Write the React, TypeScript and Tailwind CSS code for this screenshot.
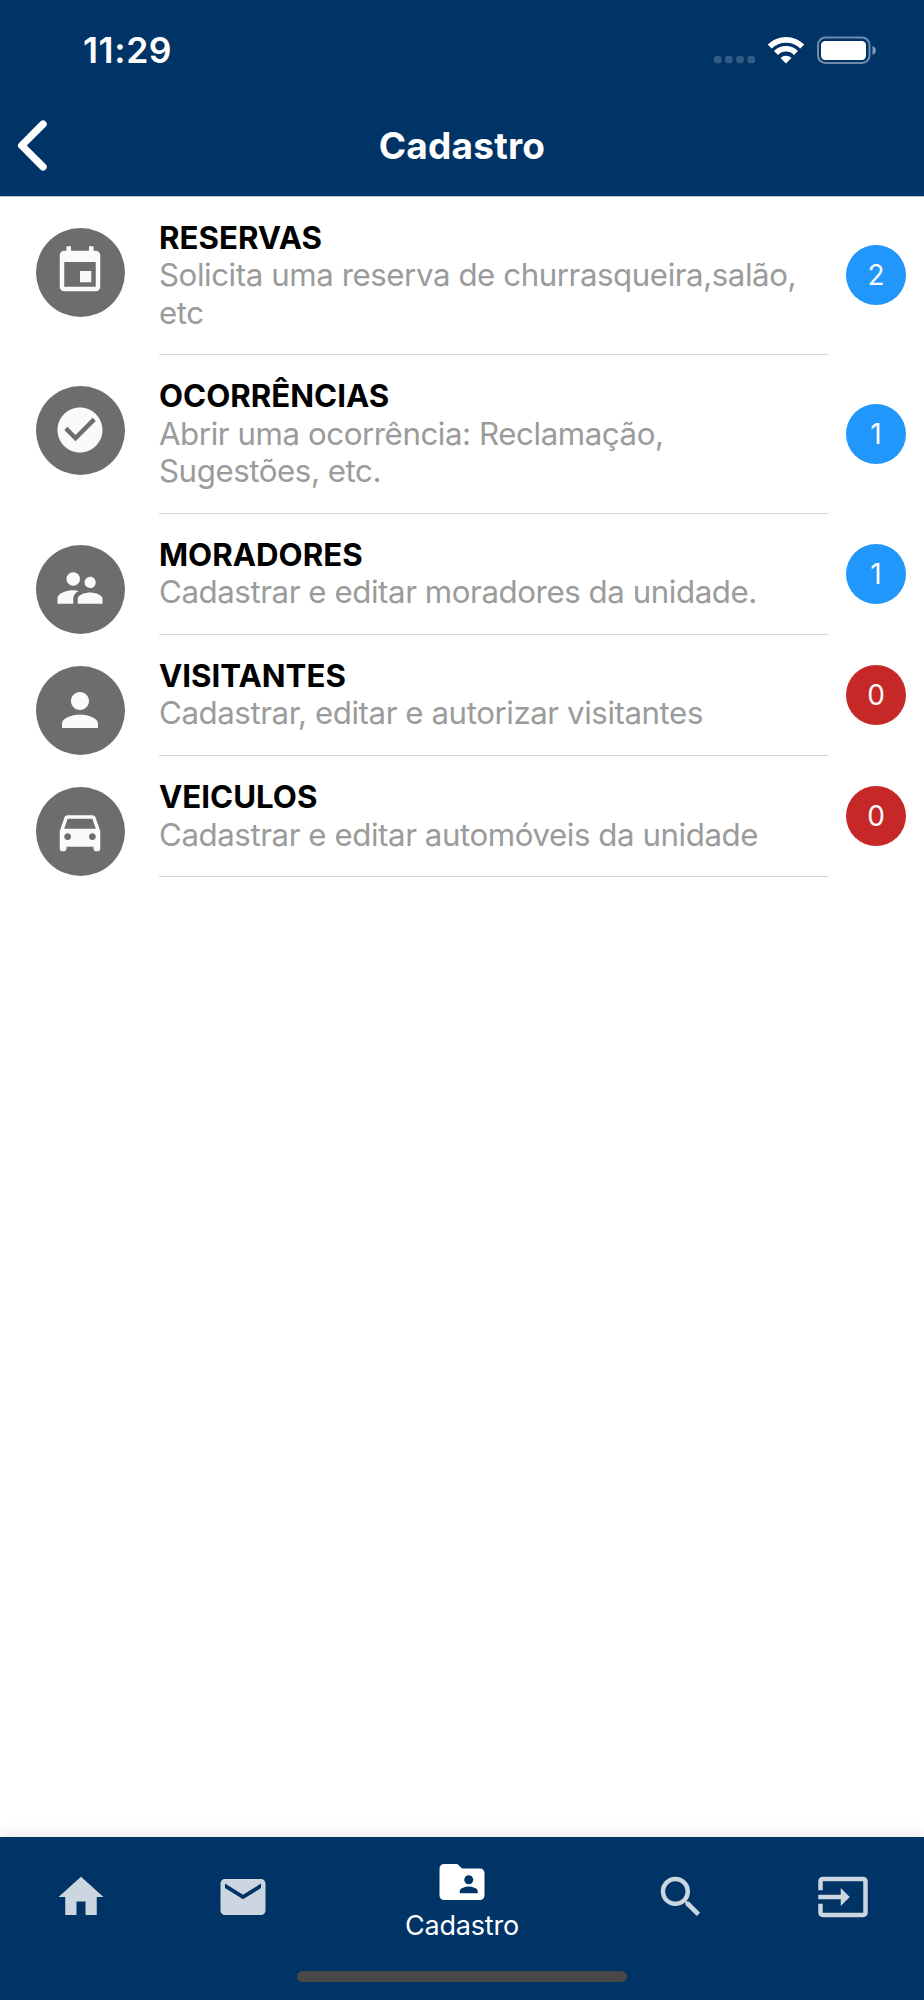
import React from "react";
import {
  MdCheckCircle,
  MdDirectionsCar,
  MdEvent,
  MdFolderShared,
  MdHome,
  MdInput,
  MdMail,
  MdPerson,
  MdSearch,
  MdSupervisorAccount,
} from "react-icons/md";
import type { IconType } from "react-icons";

type Entry = {
  title: string;
  text: string;
  count: number;
  Icon: IconType;
};

const entries: Entry[] = [
  { title: "RESERVAS", text: "Solicita uma reserva de churrasqueira,salão, etc", count: 2, Icon: MdEvent },
  { title: "OCORRÊNCIAS", text: "Abrir uma ocorrência: Reclamação, Sugestões, etc.", count: 1, Icon: MdCheckCircle },
  { title: "MORADORES", text: "Cadastrar e editar moradores da unidade.", count: 1, Icon: MdSupervisorAccount },
  { title: "VISITANTES", text: "Cadastrar, editar e autorizar visitantes", count: 0, Icon: MdPerson },
  { title: "VEICULOS", text: "Cadastrar e editar automóveis da unidade", count: 0, Icon: MdDirectionsCar },
];

function StatusBar() {
  return (
    <div className="flex h-[100px] items-center justify-between pl-[83px] pr-[47px] text-white">
      <span className="pt-[2px] text-[35.5px] font-semibold leading-[42px] tracking-[0.6px]">11:29</span>
      <svg width="164" height="30" viewBox="713 35 164 30" fill="none">
        <g fill="#335c85">
          <rect x="714" y="56" width="7.6" height="7.2" rx="2.4" />
          <rect x="725" y="56" width="7.6" height="7.2" rx="2.4" />
          <rect x="736.2" y="56" width="7.6" height="7.2" rx="2.4" />
          <rect x="747.4" y="56" width="7.6" height="7.2" rx="2.4" />
        </g>
        <g stroke="#fff" strokeWidth="5.6">
          <path d="M769.7 46.6a23 23 0 0 1 32.6 0" />
          <path d="M776 53a14 14 0 0 1 20 0" />
        </g>
        <path d="M780.5 58a7.8 7.8 0 0 1 11 0l-5.5 5.4z" fill="#fff" />
        <rect x="818" y="37.5" width="51.5" height="25.5" rx="7.5" stroke="#6f8cab" strokeWidth="2" />
        <rect x="821" y="41" width="45" height="19" rx="4.2" fill="#fff" />
        <path d="M872.5 46v9c2-.8 3.4-2.5 3.4-4.5s-1.4-3.7-3.4-4.5z" fill="#7f99b3" />
      </svg>
    </div>
  );
}

function TitleBar() {
  return (
    <div className="grid h-[91px] grid-cols-[1fr_auto_1fr] items-center text-white">
      <svg width="64" height="70" viewBox="0 110.5 64 70" fill="none" aria-label="Voltar">
        <path d="M43 123.7L21.7 145L43 166.3" stroke="#fff" strokeWidth="7.4" strokeLinecap="round" strokeLinejoin="round" />
      </svg>
      <h1 className="text-[37px] font-bold leading-[44px] tracking-[0.2px]">Cadastro</h1>
      <span />
    </div>
  );
}

function Row({ title, text, count, Icon }: Entry) {
  return (
    <li className="flex pl-9 pr-[18px]">
      <div className="mt-[31.2px] flex size-[89.2px] shrink-0 items-center justify-center rounded-full bg-[#6d6d6d]">
        <Icon className="mr-[2px] mb-[2px] size-[54px] text-[#fafafa]" />
      </div>
      <div className="ml-[33.8px] flex-1 border-b border-[#d6d6d6] pt-[23.2px] pb-[21.9px] text-[31.25px] leading-[37.5px]">
        <h2 className="font-bold text-black">{title}</h2>
        <p className="tracking-[-0.43px] text-[#9b9b9b]">{text}</p>
      </div>
      <span
        className={
          "mb-[0.8px] ml-[18px] flex size-[60px] shrink-0 items-center justify-center self-center rounded-full text-[28px] leading-[34px] text-[#fafafa] " +
          (count > 0 ? "bg-[#2196fb]" : "bg-[#c62828]")
        }
      >
        {count}
      </span>
    </li>
  );
}

function NavItem({ Icon }: { Icon: IconType }) {
  return (
    <button className="flex h-[120px] w-[161.7px] items-center justify-center text-[#ccd6e0]">
      <Icon className="size-[54px]" />
    </button>
  );
}

export default function App() {
  return (
    <div className="flex h-[2000px] w-[924px] flex-col overflow-hidden bg-white font-['Inter','Liberation_Sans',sans-serif]">
      <header className="h-[196.5px] shrink-0 border-b border-[#c4c4c8] bg-[#003366]">
        <StatusBar />
        <TitleBar />
      </header>
      <main className="flex-1">
        <ul>
          {entries.map((entry) => (
            <Row key={entry.title} {...entry} />
          ))}
        </ul>
      </main>
      <nav className="h-[163px] shrink-0 bg-[#003366] shadow-[0_-2px_14px_rgba(0,0,0,0.11)]">
        <div className="flex h-[134px] items-start">
          <NavItem Icon={MdHome} />
          <NavItem Icon={MdMail} />
          <button className="flex h-[134px] w-[277.2px] flex-col items-center pt-[17.5px] text-white">
            <MdFolderShared className="size-[54px]" />
            <span className="mt-[1.6px] text-[27px] leading-[32px] tracking-[-0.2px]">Cadastro</span>
          </button>
          <NavItem Icon={MdSearch} />
          <NavItem Icon={MdInput} />
        </div>
        <div className="mx-auto h-[11px] w-[330px] rounded-full bg-[#484848]" />
      </nav>
    </div>
  );
}
